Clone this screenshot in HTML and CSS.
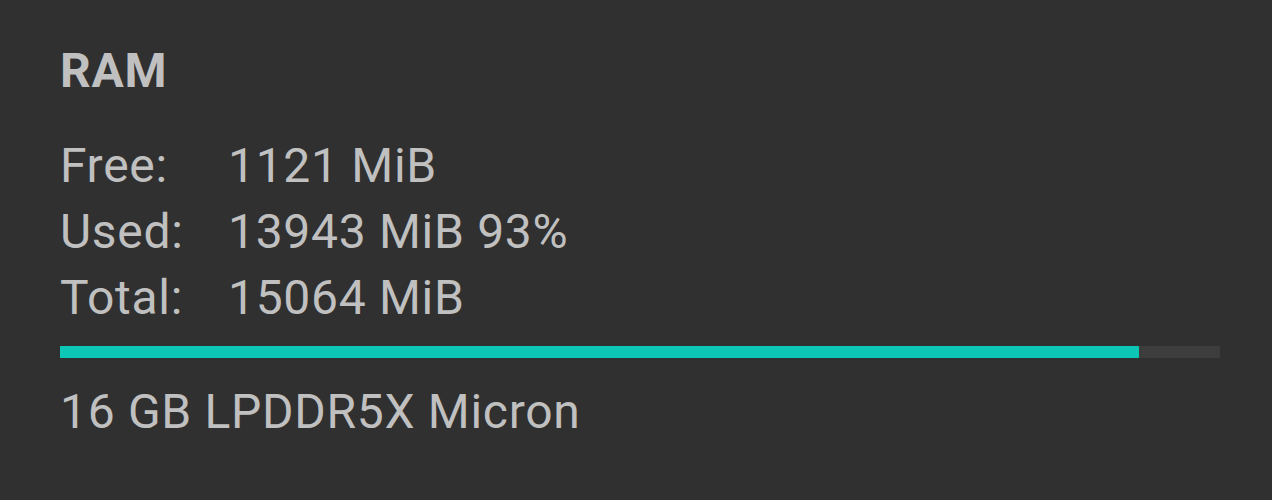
FILE: index.html
```html
<!DOCTYPE html>
<html lang="en">
<head>
  <meta charset="UTF-8">
  <meta name="viewport" content="width=device-width, initial-scale=1.0">
  <title>RAM</title>
  <link rel="stylesheet" href="styles.css">
</head>
<body>
  <div class="card">
    <h2 class="card-title">RAM</h2>
    <div class="stats">
      <span class="label">Free:</span><span class="value">1121 MiB</span>
      <span class="label">Used:</span><span class="value">13943 MiB 93%</span>
      <span class="label">Total:</span><span class="value">15064 MiB</span>
    </div>
    <div class="bar">
      <div class="bar-fill" style="width: 93%"></div>
    </div>
    <div class="info">16 GB LPDDR5X Micron</div>
  </div>
</body>
</html>
```

FILE: styles.css
```css
/* Page */
body {
  margin: 0;
  padding: 0;
  background-color: #303030;
  color: #c0c0c0;
  font-family: Roboto, "Liberation Sans", sans-serif;
  letter-spacing: 0.7px;
}

/* RAM card */
.card {
  padding: 38px 52px 0 60px;
}

.card-title {
  margin: 0 0 29px 0;
  font-size: 48px;
  font-weight: bold;
  line-height: 66px;
}

/* Free / Used / Total rows */
.stats {
  display: grid;
  grid-template-columns: 168px auto;
  font-size: 48px;
  line-height: 66px;
}

/* Usage bar */
.bar {
  height: 12px;
  margin-top: 15px;
  background-color: #3d3d3d;
}

.bar-fill {
  height: 100%;
  background-color: #0cc7b5;
}

.info {
  margin-top: 21px;
  font-size: 48px;
  line-height: 66px;
}
```
